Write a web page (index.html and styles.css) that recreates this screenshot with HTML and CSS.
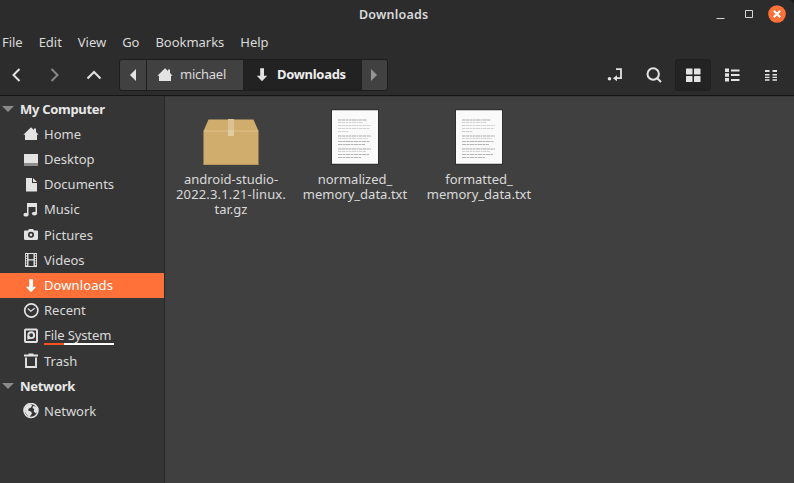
FILE: index.html
```html
<!DOCTYPE html>
<html lang="en">
<head>
<meta charset="utf-8">
<title>Downloads</title>
<link rel="stylesheet" href="styles.css">
</head>
<body>
<svg width="0" height="0" class="defs">
  <symbol id="home" viewBox="0 0 16 16"><path d="M8 1.200 11 4V2.600h2v3.300L15.600 8.800H14V14H2V8.800H.4z"/></symbol>
  <symbol id="down" viewBox="0 0 16 16"><path d="M6.200 1.200h3.800V8.800H13.200L8 14.300 2.800 8.800h3.400z"/></symbol>
  <symbol id="page" viewBox="0 0 48 56">
    <path fill="#303030" d="M0 0h48v56H0z"/><path fill="#fafafa" d="M1 1h46v54H1z"/><path fill="#c8c8c8" d="M1 1h46v1H1zM1 54h46v1H1z"/>
    <g stroke="#d2d2d2" stroke-dasharray="3 .5 4 .5 2 .5"><path stroke-width="2" d="M7 11h29M7 27h33M7 40h33"/><path d="M7 13.500h25M7 16.500h33M7 19.500h32M7 22.500h11M7 29.500h30M7 42.500h28"/></g>
    <g stroke="#b4b4b4" stroke-dasharray="4 .5 3 .5"><path d="M7 32.500h32M7 35.500h27M7 45.500h31M7 48.500h23"/></g>
  </symbol>
</svg>
<div class="window">
  <header class="titlebar">
    <h1>Downloads</h1>
    <div class="controls">
      <svg width="9" height="16"><path d="M.5 12.500h8" stroke="#d6d6d6"/></svg>
      <svg width="9" height="16"><path d="M1.500 4.500h7v7h-7z" stroke="#d6d6d6" fill="none"/></svg>
      <svg width="18" height="18"><circle cx="9" cy="9" r="8.800" fill="#ff7139"/><path d="m5.800 5.800 6.400 6.400m0-6.400-6.400 6.400" stroke="#fff" stroke-width="2"/></svg>
    </div>
  </header>
  <nav class="menu"><span>File</span><span>Edit</span><span>View</span><span>Go</span><span>Bookmarks</span><span>Help</span></nav>
  <div class="toolbar">
    <div class="nav">
      <svg width="16" height="16"><path d="m11.500 2-6 6 6 6" class="line"/></svg>
      <svg width="16" height="16" class="dim"><path d="m4.500 2 6 6-6 6" class="line"/></svg>
      <svg width="16" height="16"><path d="m1.500 11.500 6.500-6.500 6.500 6.500" class="line"/></svg>
    </div>
    <div class="path">
      <div class="seg prev"><svg width="7" height="12"><path d="M6 0v12L0 6z"/></svg></div>
      <div class="seg user"><svg width="16" height="16"><use href="#home"/></svg><span>michael</span></div>
      <div class="seg current"><svg width="16" height="16"><use href="#down"/></svg><b>Downloads</b></div>
      <div class="seg next"><svg width="7" height="12"><path d="M0 0v12l6-6z"/></svg></div>
    </div>
    <div class="tools">
      <div class="tool"><svg width="16" height="16"><path d="M9 2.200h5v9H8" fill="none" stroke="#e3e3e3" stroke-width="1.800"/><path d="M10 8.200v6l-4-3z"/><circle cx="2.500" cy="11.800" r="1.800"/></svg></div>
      <div class="tool"><svg width="16" height="16"><circle cx="7.200" cy="7" r="5.700" class="line"/><path d="m11 11 4 4" class="line"/></svg></div>
      <div class="tool active"><svg width="16" height="16"><rect x="1" y="1.500" width="6.500" height="6" rx=".6"/><rect x="9" y="1.500" width="6.500" height="6" rx=".6"/><rect x="1" y="9" width="6.500" height="6" rx=".6"/><rect x="9" y="9" width="6.500" height="6" rx=".6"/></svg></div>
      <div class="tool"><svg width="16" height="16"><path d="M1 1.500h4v3.500H1zM1 6.200h4v3.500H1zM1 11h4v3.500H1zM7 2.500h8.500v2H7zM7 7h8.500v2H7zM7 12h8.500v2H7z"/></svg></div>
      <div class="tool"><svg width="16" height="16"><path d="M2 3h4.500v2H2zM9.500 3H14v2H9.500zM2 7h4.500v1.500H2zM9.500 7H14v1.500H9.500zM2 9.800h4.500v1.200H2zM9.500 9.800H14v1.200H9.500zM2 12.200h4.500v1.500H2zM9.500 12.200H14v1.500H9.500z"/></svg></div>
    </div>
  </div>
  <main>
    <aside>
      <div class="head"><svg width="12" height="6"><path d="M0 0h12L6 6z"/></svg><b>My Computer</b></div>
      <div class="row"><svg width="16" height="16"><use href="#home"/></svg><span>Home</span></div>
      <div class="row"><svg width="16" height="16"><path d="M1 2h14v9.500H1z"/><path fill="#8e8e8e" d="M1 11.500h14V14H1z"/></svg><span>Desktop</span></div>
      <div class="row"><svg width="16" height="16"><path d="M3 1h6v5h5v8.500H3zM10 1l4 4h-4z"/></svg><span>Documents</span></div>
      <div class="row"><svg width="16" height="16"><path d="M4 1h10v10.500h-1.500V5h-7v7.500H4z"/><ellipse cx="3" cy="12.700" rx="2.600" ry="1.900"/><ellipse cx="11.500" cy="11.600" rx="2.600" ry="1.900"/></svg><span>Music</span></div>
      <div class="row"><svg width="16" height="16"><path d="M2 3.500h3L6 2h4l1 1.500h3q1 0 1 1v7q0 1.500-1.500 1.500h-11Q1 13 1 11.500v-7q0-1 1-1z"/><circle cx="8" cy="7.800" r="2.200" fill="#e3e3e3" stroke="#353535" stroke-width="1.700"/></svg><span>Pictures</span></div>
      <div class="row"><svg width="16" height="16"><path fill-rule="evenodd" d="M2 1h12v14H2zM5.500 2v5.300h5V2zM5.500 8.600V14h5V8.600z"/><path d="M3.500 2v12M12.500 2v12" stroke="#353535" stroke-width="1.200" stroke-dasharray="1.600 .8"/></svg><span>Videos</span></div>
      <div class="row selected"><svg width="16" height="16"><use href="#down"/></svg><span>Downloads</span></div>
      <div class="row"><svg width="16" height="16"><circle cx="8.300" cy="7.500" r="6.600" fill="none" stroke="#e3e3e3" stroke-width="1.700"/><path d="m4.800 5.500 3 2.700 3.900-3" fill="none" stroke="#e3e3e3" stroke-width="1.200"/></svg><span>Recent</span></div>
      <div class="row"><svg width="16" height="16"><rect x="2" y="1.500" width="12" height="12.500" rx=".7" fill="none" stroke="#e3e3e3" stroke-width="1.900"/><circle cx="8.200" cy="7.200" r="2.900" fill="none" stroke="#e3e3e3" stroke-width="1.900"/><path d="M4.400 8h2l1.500 2.500-3.500 1.300z"/></svg><span class="usage">File System</span></div>
      <div class="row"><svg width="16" height="16"><path d="M1 1.500h4.500V.5h5v1H15v2H1z"/><path d="M3 4.500V14h10V4.500" fill="none" stroke="#e3e3e3" stroke-width="1.900"/></svg><span>Trash</span></div>
      <div class="head"><svg width="12" height="6"><path d="M0 0h12L6 6z"/></svg><b>Network</b></div>
      <div class="row"><svg width="16" height="16"><circle cx="8" cy="7.500" r="7" fill="none" stroke="#e3e3e3" stroke-width="1.600"/><path d="M1.200 7 3 3l3.500-2 2.800 1L8 4.500 5.800 5.500 5 7.500l3 1 1 2L6.500 14 3.500 11.500zM10 3l3.500.5 1.300 4-1.800 3-2.300-2 .5-2.500-1.700-1z"/></svg><span>Network</span></div>
    </aside>
    <section class="files">
      <figure><svg width="56" height="56"><path fill="#d0ad6d" d="M5.500 10.500h45L55.500 22v33.500H.5V22z"/><path d="M.8 22h54.400" stroke="#dfc28b"/><path fill="#dbc193" d="M25 10h6v11h-6z"/><path fill="#e0cba2" d="M25 21h6v6h-6z"/><path d="M.5 55.500h55" stroke="#b6965b"/></svg><figcaption>android-studio-<br><span class="wide">2022.3.1.21-linux.</span><br>tar.gz</figcaption></figure>
      <figure><svg width="48" height="56"><use href="#page"/></svg><figcaption>normalized_<br>memory_data.txt</figcaption></figure>
      <figure><svg width="48" height="56"><use href="#page"/></svg><figcaption>formatted_<br>memory_data.txt</figcaption></figure>
    </section>
  </main>
</div>
</body>
</html>
```
FILE: styles.css
```css
* { box-sizing: border-box; }
body { margin: 0; background: #171717; font: 13px/15px "Noto Sans", sans-serif; color: #dadada; }
svg { display: block; flex: none; fill: #e3e3e3; }
b { letter-spacing: -.3px; }
.defs { position: absolute; }
.window { width: 794px; height: 483px; display: flex; flex-direction: column; background: #2c2c2c; border-radius: 0 5px 0 0; overflow: hidden; }
.titlebar { height: 28px; display: grid; grid-template-columns: 1fr auto; align-items: center; }
h1 { margin: 0; padding: 1px 0 0 359px; font-size: 12.5px; letter-spacing: .2px; line-height: 27px; font-weight: 600; }
.controls { display: flex; align-items: center; gap: 19px; padding-right: 8px; }
.controls svg:last-child { margin-left: -4px; }
.menu { height: 28px; display: flex; align-items: center; gap: 16px; padding-left: 2px; letter-spacing: -.03px; }
.toolbar { height: 40px; display: flex; align-items: center; padding: 0 5px 2px 8px; border-bottom: 1px solid #161616; }
.nav { display: flex; gap: 23px; width: 111px; }
.dim { opacity: .5; }
.line { fill: none; stroke: #e3e3e3; stroke-width: 2; }
.path { display: flex; width: 269px; height: 32px; border: 1px solid #1d1d1d; border-radius: 3px; background: #414141; overflow: hidden; }
.seg { display: flex; align-items: center; gap: 7px; border-right: 1px solid #202020; }
.prev { width: 27px; padding-left: 10px; }
.user { width: 97px; padding-left: 10px; letter-spacing: -.25px; }
.current { width: 118px; padding-left: 10px; background: #222; color: #eee; }
.next { flex: 1; border: 0; padding-left: 9px; }
.next svg { fill: #959595; }
.tools { display: flex; gap: 3px; margin-left: auto; }
.tool { width: 36px; height: 32px; display: grid; place-items: center; border: 1px solid transparent; border-radius: 3px; }
.active { background: #232323; border-color: #1f1f1f; }
main { flex: 1; display: flex; min-height: 0; }
aside { width: 165px; padding-top: .6px; background: #353535; border-right: 1px solid #272727; }
.head, .row { height: 25.2px; display: flex; align-items: center; }
.head { padding-left: 2px; gap: 6px; color: #e8e8e8; }
.head svg { fill: #8a8a8a; }
.row { padding-left: 23px; gap: 5px; }
.selected { background: #ff7139; color: #fff; letter-spacing: .1px; }
.selected svg { fill: #fff; }
.usage { width: 70px; background: linear-gradient(90deg, #f4511e 28%, #fff 28%) bottom / 100% 2px no-repeat; padding: 1px 0 2px; letter-spacing: -.1px; white-space: nowrap; }
.files { flex: 1; display: flex; align-items: flex-start; background: #404040; padding: 12px 0 0 4px; border-top: 1px solid #383838; }
figure { width: 124px; margin: 0; display: flex; flex-direction: column; align-items: center; }
figcaption { margin-top: 7px; text-align: center; white-space: nowrap; }
.wide { letter-spacing: .15px; }
```
